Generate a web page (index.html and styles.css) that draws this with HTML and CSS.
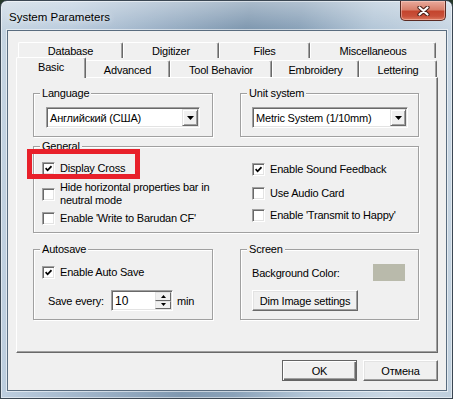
FILE: index.html
```html
<!DOCTYPE html>
<html lang="en">
<head>
    <meta charset="UTF-8">
    <meta name="viewport" content="width=device-width, initial-scale=1.0">
    <title>System Parameters</title>
    <link rel="stylesheet" href="styles.css">
</head>
<body>
    <div class="window">
        <!-- Title bar -->
        <div class="titlebar">
            <span class="title">System Parameters</span>
            <div class="close-btn">
                <svg width="13" height="10" viewBox="0 0 13 10">
                    <path d="M2.5 1.5 L10.5 8.5 M10.5 1.5 L2.5 8.5" stroke="#4a2019" stroke-width="4.2" stroke-linecap="round"/>
                    <path d="M2.5 1.5 L10.5 8.5 M10.5 1.5 L2.5 8.5" stroke="#fff" stroke-width="2.2" stroke-linecap="round"/>
                </svg>
            </div>
        </div>

        <div class="client">
            <!-- Tabs -->
            <div class="tabs">
                <div class="tab-row back">
                    <div class="tab tab-database">Database</div>
                    <div class="tab tab-digitizer">Digitizer</div>
                    <div class="tab tab-files">Files</div>
                    <div class="tab tab-misc">Miscellaneous</div>
                </div>
                <div class="tab-row front">
                    <div class="tab active tab-basic">Basic</div>
                    <div class="tab tab-advanced">Advanced</div>
                    <div class="tab tab-tool">Tool Behavior</div>
                    <div class="tab tab-embroidery">Embroidery</div>
                    <div class="tab tab-lettering">Lettering</div>
                </div>
            </div>

            <!-- Basic page -->
            <div class="panel">
                <fieldset class="group">
                    <legend>Language</legend>
                    <div class="group-body body-lang">
                        <div class="combo">
                            <span class="combo-text">Английский (США)</span>
                            <span class="combo-btn">
                                <svg width="7" height="4" viewBox="0 0 7 4"><path d="M0 0 H7 L3.5 4 Z" fill="#000"/></svg>
                            </span>
                        </div>
                    </div>
                </fieldset>

                <fieldset class="group">
                    <legend>Unit system</legend>
                    <div class="group-body body-unit">
                        <div class="combo">
                            <span class="combo-text">Metric System (1/10mm)</span>
                            <span class="combo-btn">
                                <svg width="7" height="4" viewBox="0 0 7 4"><path d="M0 0 H7 L3.5 4 Z" fill="#000"/></svg>
                            </span>
                        </div>
                    </div>
                </fieldset>

                <fieldset class="group group-wide">
                    <legend>General</legend>
                    <div class="group-body body-general">
                        <div class="check-col left">
                            <label class="check">
                                <span class="box"><svg width="7" height="7" viewBox="0 0 7 7"><path d="M0.6 3.2 L2.6 5.3 L6.5 1.2" stroke="#000" stroke-width="1.7" fill="none"/></svg></span>
                                <span class="check-text">Display Cross</span>
                            </label>
                            <label class="check">
                                <span class="box"></span>
                                <span class="check-text wrap">Hide horizontal properties bar in neutral mode</span>
                            </label>
                            <label class="check">
                                <span class="box"></span>
                                <span class="check-text">Enable 'Write to Barudan CF'</span>
                            </label>
                        </div>
                        <div class="check-col right">
                            <label class="check">
                                <span class="box"><svg width="7" height="7" viewBox="0 0 7 7"><path d="M0.6 3.2 L2.6 5.3 L6.5 1.2" stroke="#000" stroke-width="1.7" fill="none"/></svg></span>
                                <span class="check-text">Enable Sound Feedback</span>
                            </label>
                            <label class="check">
                                <span class="box"></span>
                                <span class="check-text">Use Audio Card</span>
                            </label>
                            <label class="check">
                                <span class="box"></span>
                                <span class="check-text">Enable 'Transmit to Happy'</span>
                            </label>
                        </div>
                    </div>
                </fieldset>

                <fieldset class="group group-low">
                    <legend>Autosave</legend>
                    <div class="group-body body-autosave">
                        <label class="check">
                            <span class="box"><svg width="7" height="7" viewBox="0 0 7 7"><path d="M0.6 3.2 L2.6 5.3 L6.5 1.2" stroke="#000" stroke-width="1.7" fill="none"/></svg></span>
                            <span class="check-text">Enable Auto Save</span>
                        </label>
                        <div class="save-row">
                            <span class="save-label">Save every:</span>
                            <div class="spin">
                                <span class="spin-text">10</span>
                                <span class="spin-btns">
                                    <span class="spin-btn"><svg width="5" height="3" viewBox="0 0 5 3"><path d="M0 3 H5 L2.5 0 Z" fill="#000"/></svg></span>
                                    <span class="spin-btn"><svg width="5" height="3" viewBox="0 0 5 3"><path d="M0 0 H5 L2.5 3 Z" fill="#000"/></svg></span>
                                </span>
                            </div>
                            <span class="unit">min</span>
                        </div>
                    </div>
                </fieldset>

                <fieldset class="group group-low">
                    <legend>Screen</legend>
                    <div class="group-body body-screen">
                        <div class="color-row">
                            <span>Background Color:</span>
                            <span class="swatch"></span>
                        </div>
                        <div class="btn btn-dim">Dim Image settings</div>
                    </div>
                </fieldset>

                <!-- annotation -->
                <div class="highlight"></div>
            </div>

            <!-- Dialog buttons -->
            <div class="footer">
                <div class="btn btn-default">OK</div>
                <div class="btn">Отмена</div>
            </div>
        </div>
    </div>
</body>
</html>
```

FILE: styles.css
```css
body {
    margin: 0;
    padding: 0;
    background-color: #26382a;
    font-family: "Liberation Sans", Arial, sans-serif;
    font-size: 11px;
    letter-spacing: -0.2px;
    color: #000;
}

.window {
    width: 453px;
    height: 399px;
    box-sizing: border-box;
    border: 1px solid #3b4753;
    border-radius: 7px 7px 0 0;
    padding: 0 5px 7px 6px;
    display: flex;
    flex-direction: column;
    background:
        linear-gradient(180deg, rgba(255, 255, 255, 0.35), rgba(255, 255, 255, 0) 28px),
        linear-gradient(100deg, #c6d5e2 0%, #bccdde 14%, #9fb4c9 30%, #7f98b0 48%, #8aa2b9 58%, #b3c6d7 72%, #c9d7e4 88%, #bfcfdd 100%);
    box-shadow: inset 0 0 0 1px rgba(255, 255, 255, 0.5);
}

.titlebar {
    height: 29px;
    display: flex;
    justify-content: space-between;
    align-items: flex-start;
}

.title {
    font-size: 11.5px;
    letter-spacing: 0;
    line-height: 15px;
    padding: 9px 0 0 2px;
    color: #000;
    text-shadow: 0 0 6px rgba(255, 255, 255, 0.9);
}

.close-btn {
    width: 46px;
    height: 20px;
    box-sizing: border-box;
    margin-right: 1px;
    border: 1px solid #5a2a22;
    border-top: none;
    border-radius: 0 0 5px 5px;
    background: linear-gradient(180deg, #e9aa9c 0%, #d8806c 45%, #c4452e 55%, #c8503a 80%, #dd7a5f 100%);
    box-shadow: inset 0 0 0 1px rgba(255, 220, 210, 0.45);
    display: flex;
    align-items: center;
    justify-content: center;
}

.client {
    flex: 1;
    background-color: #f0f0f0;
    border: 1px solid #596c7f;
    box-shadow: 0 0 0 1px rgba(255, 255, 255, 0.55);
    display: flex;
    flex-direction: column;
}

/* Tabs */
.tabs {
    margin: 11px 8px 0;
}

.tab-row {
    display: flex;
    padding-left: 2px;
}

.tab-row.back {
    height: 16px;
}

.tab-row.front {
    height: 19px;
    align-items: flex-end;
}

.tab {
    box-sizing: border-box;
    height: 16px;
    display: flex;
    align-items: center;
    justify-content: center;
    background-color: #f0f0f0;
    border-top: 1px solid #fff;
    border-left: 1px solid #fff;
    border-right: 1px solid #696969;
    border-radius: 2px 2px 0 0;
    box-shadow: inset -1px 0 0 #a0a0a0;
    padding-top: 1px;
}

.front .tab {
    height: 17px;
}

.front .tab.active {
    height: 21px;
    margin: 0 -1px -1px -2px;
    padding-bottom: 3px;
    position: relative;
    z-index: 2;
}

.tab-database { width: 105px; }
.tab-digitizer { width: 96px; }
.tab-files { width: 91px; }
.tab-misc { width: 126px; }
.tab-basic { width: 70px; }
.tab-advanced { width: 85px; }
.tab-tool { width: 102px; }
.tab-embroidery { width: 87px; }
.tab-lettering { width: 78px; }

/* Panel */
.panel {
    position: relative;
    margin: 0 8px;
    height: 276px;
    box-sizing: border-box;
    border-top: 1px solid #fff;
    border-left: 1px solid #fff;
    border-right: 1px solid #696969;
    border-bottom: 1px solid #696969;
    box-shadow: inset -1px -1px 0 #a0a0a0;
    padding: 8px 0 0 16px;
    display: grid;
    grid-template-columns: 180px 179px;
    column-gap: 27px;
    align-content: start;
}

.group {
    margin: 0;
    padding: 0;
    min-width: 0;
    border: 1px solid #a0a0a0;
    box-shadow: inset 1px 1px 0 #fff, 1px 1px 0 #fff;
}

.group legend {
    margin-left: 6px;
    padding: 0 2px;
    line-height: 14px;
    background-color: #f0f0f0;
}

.group-wide {
    grid-column: 1 / 3;
    margin-top: 2px;
}

.group-low {
    margin-top: 9px;
}

.body-lang {
    padding: 7px 12px 8px 12px;
}

.body-unit {
    padding: 7px 10px 8px 11px;
}

/* Combo box */
.combo {
    height: 21px;
    box-sizing: border-box;
    background-color: #fff;
    border: 1px solid;
    border-color: #a0a0a0 #fff #fff #a0a0a0;
    box-shadow: inset 1px 1px 0 #696969, inset -1px -1px 0 #e3e3e3;
    display: flex;
    align-items: center;
    justify-content: space-between;
    padding: 1px 1px 1px 3px;
}

.combo-btn {
    width: 16px;
    height: 17px;
    box-sizing: border-box;
    background-color: #f0f0f0;
    border: 1px solid;
    border-color: #e3e3e3 #696969 #696969 #e3e3e3;
    box-shadow: inset 1px 1px 0 #fff, inset -1px -1px 0 #a0a0a0;
    display: flex;
    align-items: center;
    justify-content: center;
}

/* General */
.body-general {
    padding: 9px 8px 7px 8px;
    display: grid;
    grid-template-columns: 210px 1fr;
}

.check-col {
    display: flex;
    flex-direction: column;
}

.check {
    display: flex;
    align-items: center;
    gap: 5px;
    line-height: 13px;
}

.left .check:nth-child(2) { margin-top: 6px; }
.left .check:nth-child(3) { margin-top: 5px; }
.right .check:nth-child(1) { margin-top: 1px; }
.right .check:nth-child(2) { margin-top: 11px; }
.right .check:nth-child(3) { margin-top: 9px; }

.box {
    width: 13px;
    height: 13px;
    flex: none;
    box-sizing: border-box;
    background-color: #fff;
    border: 1px solid;
    border-color: #a0a0a0 #fff #fff #a0a0a0;
    box-shadow: inset 1px 1px 0 #696969, inset -1px -1px 0 #e3e3e3;
    display: flex;
    align-items: center;
    justify-content: center;
}

.check-text.wrap {
    max-width: 154px;
}

/* Autosave */
.body-autosave {
    padding: 10px 8px 8px 8px;
}

.save-row {
    margin-top: 11px;
    padding-left: 6px;
    display: flex;
    align-items: center;
}

.save-label {
    width: 63px;
}

.spin {
    width: 62px;
    height: 21px;
    box-sizing: border-box;
    background-color: #fff;
    border: 1px solid;
    border-color: #a0a0a0 #fff #fff #a0a0a0;
    box-shadow: inset 1px 1px 0 #696969, inset -1px -1px 0 #e3e3e3;
    display: flex;
    align-items: center;
    justify-content: space-between;
    padding: 1px 1px 1px 3px;
    font-size: 12px;
    letter-spacing: 0;
}

.spin-btns {
    display: flex;
    flex-direction: column;
    width: 16px;
    height: 17px;
}

.spin-btn {
    flex: 1;
    box-sizing: border-box;
    background-color: #f0f0f0;
    border: 1px solid;
    border-color: #e3e3e3 #696969 #696969 #e3e3e3;
    display: flex;
    align-items: center;
    justify-content: center;
}

.unit {
    margin-left: 4px;
}

/* Screen */
.body-screen {
    padding: 8px 13px 8px 11px;
}

.color-row {
    height: 17px;
    display: flex;
    align-items: center;
    justify-content: space-between;
}

.swatch {
    width: 32px;
    height: 17px;
    background-color: #b9baab;
}

/* Buttons */
.btn {
    box-sizing: border-box;
    height: 21px;
    display: flex;
    align-items: center;
    justify-content: center;
    background-color: #f0f0f0;
    border: 1px solid;
    border-color: #fff #696969 #696969 #fff;
    box-shadow: inset -1px -1px 0 #a0a0a0, inset 1px 1px 0 #e3e3e3;
}

.btn-dim {
    width: 106px;
    margin-top: 9px;
}

.footer {
    display: flex;
    justify-content: flex-end;
    gap: 6px;
    margin: 7px 8px 0 0;
}

.footer .btn {
    width: 75px;
}

.btn-default {
    border: 1px solid #646464;
    box-shadow: inset 1px 1px 0 #fff, inset -1px -1px 0 #696969, inset -2px -2px 0 #a0a0a0;
}

/* red annotation frame */
.highlight {
    position: absolute;
    left: 10px;
    top: 71px;
    width: 113px;
    height: 30px;
    box-sizing: border-box;
    border: 5px solid #e8202a;
}
```
